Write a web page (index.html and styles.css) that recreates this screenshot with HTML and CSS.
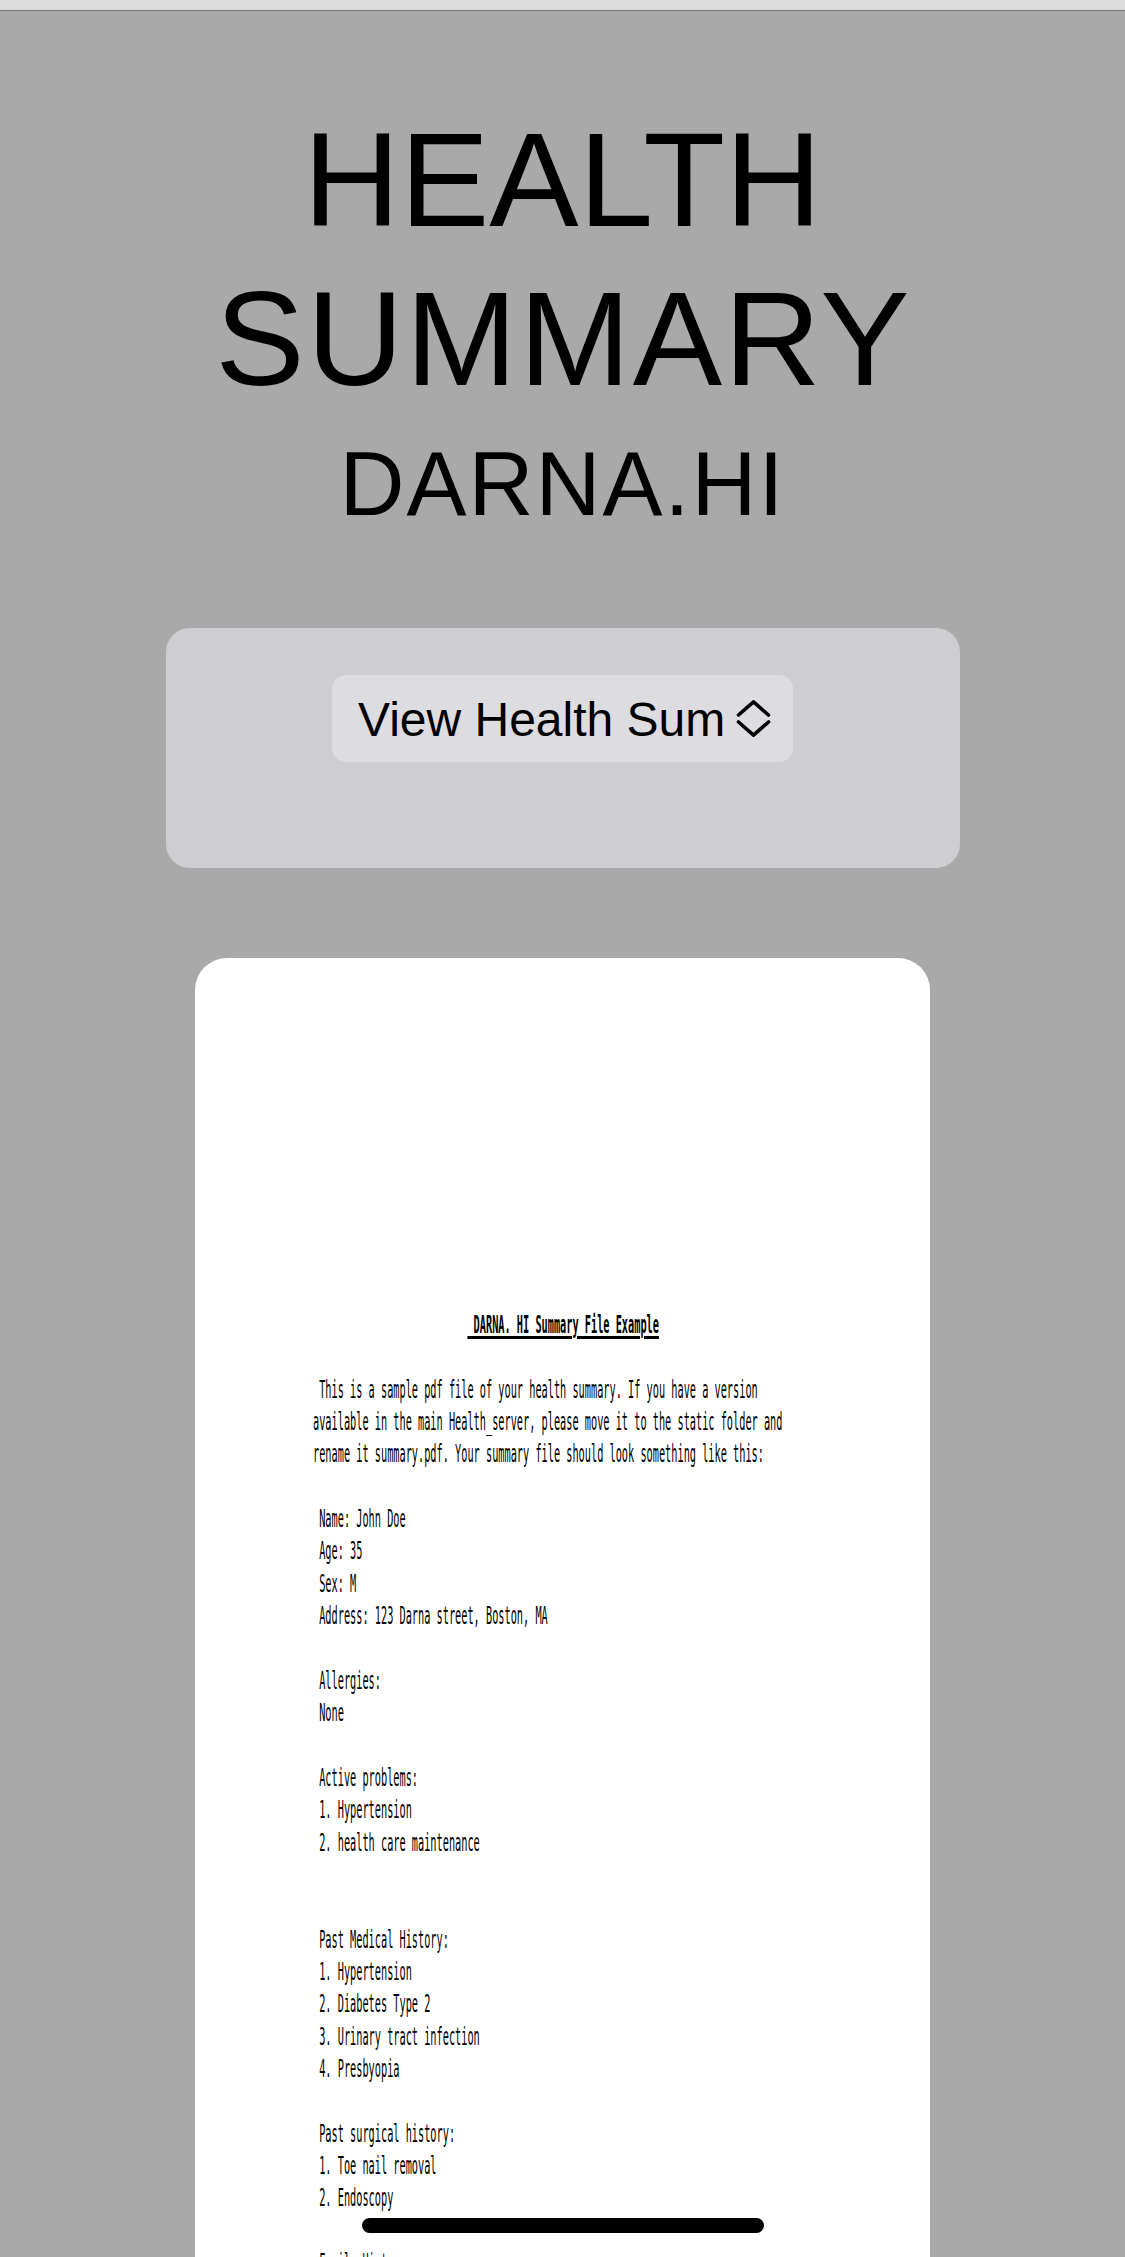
FILE: index.html
```html
<!DOCTYPE html>
<html lang="en">
<head>
<meta charset="utf-8">
<title>Health Summary</title>
<link rel="stylesheet" href="styles.css">
</head>
<body>
<div class="page">
  <div class="topbar"></div>
  <h1 class="title">HEALTH<br><span class="title-wide">SUMMARY</span></h1>
  <h2 class="subtitle">DARNA.HI</h2>
  <div class="panel">
    <div class="select">
      <div class="select-text">View Health Summary</div>
      <svg class="chev" viewBox="0 0 36 40" width="36" height="40" aria-hidden="true">
        <polyline points="2.5,16 17.5,2.8 32.5,16" fill="none" stroke="#000" stroke-width="3.6" stroke-linecap="round" stroke-linejoin="round"/>
        <polyline points="2.5,23 17.5,36.2 32.5,23" fill="none" stroke="#000" stroke-width="3.6" stroke-linecap="round" stroke-linejoin="round"/>
      </svg>
    </div>
  </div>
  <div class="card">
<pre class="pdf">                         <span class="pdf-title"> DARNA. HI Summary File Example</span>

 This is a sample pdf file of your health summary. If you have a version
available in the main Health_server, please move it to the static folder and
rename it summary.pdf. Your summary file should look something like this:

 Name: John Doe
 Age: 35
 Sex: M
 Address: 123 Darna street, Boston, MA

 Allergies:
 None

 Active problems:
 1. Hypertension
 2. health care maintenance


 Past Medical History:
 1. Hypertension
 2. Diabetes Type 2
 3. Urinary tract infection
 4. Presbyopia

 Past surgical history:
 1. Toe nail removal
 2. Endoscopy

 Family History:
 1. Hypertension</pre>
  </div>
  <div class="home-indicator"></div>
</div>
</body>
</html>
```

FILE: styles.css
```css
html, body {
  margin: 0;
  padding: 0;
}

body {
  background: #a9a9a9;
  font-family: "Liberation Sans", Arial, sans-serif;
  color: #000;
}

.page {
  height: 2257px;
  overflow: hidden;
}

.topbar {
  height: 10px;
  background: #dcdcdc;
  border-bottom: 1px solid #777777;
}

.title {
  margin: 89px 0 0;
  font-size: 134px;
  line-height: 159px;
  font-weight: 400;
  text-align: center;
}

.title-wide {
  letter-spacing: 2px;
  margin-right: -2px;
}

.subtitle {
  margin: 14px 0 0;
  font-size: 90px;
  line-height: 104px;
  font-weight: 400;
  letter-spacing: 2px;
  text-align: center;
}

.panel {
  width: 794px;
  height: 240px;
  margin: 92px auto 0;
  padding-top: 47px;
  box-sizing: border-box;
  background: #cdcdd2;
  border-radius: 24px;
  display: flex;
  justify-content: center;
  align-items: flex-start;
}

.select {
  width: 461px;
  height: 87px;
  box-sizing: border-box;
  padding: 0 21px 0 26px;
  background: #dcdce1;
  border-radius: 14px;
  display: flex;
  align-items: center;
  gap: 8px;
}

.select-text {
  width: 370px;
  flex: none;
  overflow: hidden;
  white-space: nowrap;
  font-size: 48px;
  line-height: 48px;
  padding-top: 2px;
}

.chev {
  width: 36px;
  height: 40px;
  flex: none;
  display: block;
}

.card {
  width: 735px;
  margin: 90px auto 0;
  padding: 351px 0 400px 118px;
  box-sizing: border-box;
  background: #ffffff;
  border-radius: 32px;
  overflow: hidden;
}

.pdf {
  margin: 0;
  font-family: "DejaVu Sans Mono", "Liberation Mono", monospace;
  font-size: 24.7px;
  line-height: 32.35px;
  color: #000;
  white-space: pre;
  transform: scaleX(0.4156);
  transform-origin: 0 0;
}

.pdf-title {
  font-weight: 700;
  text-decoration: underline;
  text-decoration-thickness: 3px;
  text-underline-offset: 3px;
}

.home-indicator {
  position: fixed;
  left: 50%;
  bottom: 24px;
  width: 402px;
  height: 15px;
  margin-left: -201px;
  border-radius: 8px;
  background: #000;
}
```
